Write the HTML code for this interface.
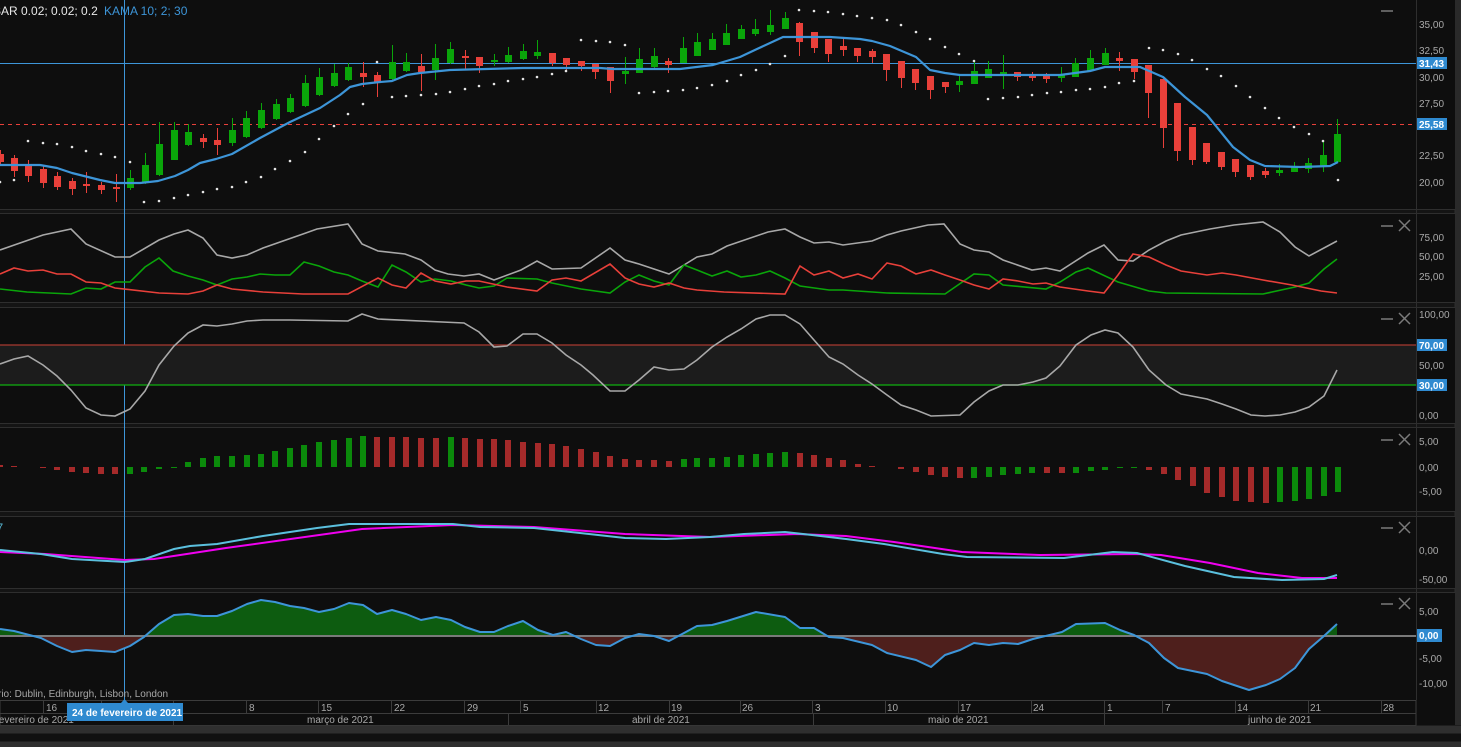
<!DOCTYPE html>
<html><head><meta charset="utf-8"><style>
html,body{margin:0;padding:0;background:#0e0e0e;}
svg{display:block;}
text{font-family:"Liberation Sans",sans-serif;}
</style></head><body>
<svg width="1461" height="747" viewBox="0 0 1461 747" xmlns="http://www.w3.org/2000/svg">
<rect width="1461" height="747" fill="#0e0e0e"/>
<rect x="1455" y="0" width="6" height="725" fill="#2a2a2a"/>
<g fill="#141414" stroke="#2e2e2e" stroke-width="1">
<rect x="-1" y="209.5" width="1456" height="4"/>
<rect x="-1" y="302.5" width="1456" height="5"/>
<rect x="-1" y="423.5" width="1456" height="4"/>
<rect x="-1" y="511.5" width="1456" height="5"/>
<rect x="-1" y="588.5" width="1456" height="4"/>
</g>
<line x1="1416.5" y1="0" x2="1416.5" y2="700" stroke="#2e2e2e"/>

<line x1="124.5" y1="0" x2="124.5" y2="712" stroke="#3d95d8" stroke-width="1"/>

<line x1="0" y1="63.5" x2="1416" y2="63.5" stroke="#3d95d8" stroke-width="1"/>
<line x1="0" y1="124.5" x2="1416" y2="124.5" stroke="#e8403a" stroke-width="1" stroke-dasharray="4,4"/>
<path stroke="#0aa50a" stroke-width="1" d="M130.5 170V190M145.5 153V184M159.5 122V176M174.5 122V160M188.5 124V146M232.5 118V146M246.5 111V138M261.5 103V129M276.5 99V120M290.5 94V113M305.5 75V107M319.5 68V96M334.5 64V87M348.5 63V81M392.5 45V80M406.5 53V72M435.5 44V80M450.5 42V64M494.5 54V66M508.5 47V63M523.5 44V60M537.5 40V59M625.5 57V84M639.5 48V73M654.5 48V68M683.5 37V63M697.5 33V56M712.5 33V50M726.5 24V45M741.5 25V39M755.5 19V36M770.5 10V35M785.5 12V29M959.5 76V92M974.5 62V84M988.5 61V78M1003.5 55V89M1061.5 67V82M1075.5 58V77M1090.5 50V71M1105.5 48V65M1279.5 164V176M1294.5 162V172M1308.5 158V173M1323.5 141V172M1337.5 119V162"/>
<path stroke="#e8403a" stroke-width="1" d="M0.5 150V166M14.5 155V177M28.5 160V182M43.5 165V188M57.5 172V190M72.5 178V195M86.5 172V193M101.5 182V194M116.5 174V202M203.5 134V148M217.5 128V155M363.5 62V87M377.5 72V97M421.5 54V91M465.5 50V69M479.5 57V73M552.5 53V66M566.5 58V72M581.5 61V71M595.5 64V79M610.5 67V93M668.5 58V73M799.5 22V56M814.5 32V53M828.5 39V62M843.5 39V56M857.5 48V62M872.5 49V63M886.5 54V81M901.5 61V88M915.5 69V90M930.5 76V99M945.5 82V93M1017.5 72V81M1032.5 72V81M1046.5 73V83M1119.5 52V71M1134.5 59V79M1148.5 65V118M1163.5 79V148M1177.5 103V161M1192.5 127V165M1206.5 143V164M1221.5 152V170M1235.5 159V177M1250.5 165V180M1265.5 168V178"/>
<g fill="#0aa50a">
<rect x="127" y="178" width="7" height="10"/><rect x="142" y="165" width="7" height="17"/><rect x="156" y="144" width="7" height="31"/><rect x="171" y="130" width="7" height="30"/><rect x="185" y="132" width="7" height="13"/><rect x="229" y="130" width="7" height="13"/><rect x="243" y="118" width="7" height="19"/><rect x="258" y="110" width="7" height="18"/><rect x="273" y="104" width="7" height="15"/><rect x="287" y="98" width="7" height="14"/><rect x="302" y="83" width="7" height="23"/><rect x="316" y="77" width="7" height="18"/><rect x="331" y="73" width="7" height="13"/><rect x="345" y="67" width="7" height="13"/>
<rect x="389" y="62" width="7" height="17"/><rect x="403" y="62" width="7" height="9"/><rect x="432" y="58" width="7" height="12"/><rect x="447" y="49" width="7" height="14"/><rect x="491" y="60" width="7" height="2"/><rect x="505" y="55" width="7" height="7"/><rect x="520" y="51" width="7" height="8"/><rect x="534" y="52" width="7" height="4"/><rect x="622" y="71" width="7" height="3"/><rect x="636" y="59" width="7" height="14"/><rect x="651" y="56" width="7" height="11"/><rect x="680" y="48" width="7" height="15"/><rect x="694" y="42" width="7" height="14"/><rect x="709" y="39" width="7" height="11"/><rect x="723" y="33" width="7" height="12"/><rect x="738" y="29" width="7" height="10"/><rect x="752" y="29" width="7" height="5"/><rect x="767" y="25" width="7" height="7"/><rect x="782" y="18" width="7" height="11"/>
<rect x="956" y="81" width="7" height="4"/><rect x="971" y="71" width="7" height="13"/><rect x="985" y="69" width="7" height="9"/><rect x="1000" y="72" width="7" height="3"/><rect x="1058" y="75" width="7" height="3"/><rect x="1072" y="63" width="7" height="14"/><rect x="1087" y="58" width="7" height="13"/><rect x="1102" y="53" width="7" height="12"/><rect x="1276" y="170" width="7" height="3"/><rect x="1291" y="167" width="7" height="5"/><rect x="1305" y="163" width="7" height="6"/><rect x="1320" y="155" width="7" height="12"/><rect x="1334" y="134" width="7" height="28"/>
</g>
<g fill="#e8403a">
<rect x="-3" y="154" width="7" height="8"/><rect x="11" y="158" width="7" height="13"/><rect x="25" y="164" width="7" height="12"/><rect x="40" y="169" width="7" height="14"/><rect x="54" y="176" width="7" height="11"/><rect x="69" y="181" width="7" height="8"/><rect x="83" y="184" width="7" height="2"/><rect x="98" y="185" width="7" height="5"/><rect x="113" y="187" width="7" height="2"/><rect x="200" y="138" width="7" height="4"/><rect x="214" y="140" width="7" height="5"/><rect x="360" y="73" width="7" height="4"/><rect x="374" y="75" width="7" height="7"/>
<rect x="418" y="66" width="7" height="6"/><rect x="462" y="56" width="7" height="2"/><rect x="476" y="57" width="7" height="9"/><rect x="549" y="53" width="7" height="10"/><rect x="563" y="58" width="7" height="7"/><rect x="578" y="61" width="7" height="5"/><rect x="592" y="64" width="7" height="8"/><rect x="607" y="67" width="7" height="14"/><rect x="665" y="61" width="7" height="4"/>
<rect x="796" y="23" width="7" height="19"/><rect x="811" y="32" width="7" height="16"/><rect x="825" y="39" width="7" height="15"/><rect x="840" y="46" width="7" height="4"/><rect x="854" y="48" width="7" height="8"/><rect x="869" y="51" width="7" height="6"/><rect x="883" y="54" width="7" height="16"/><rect x="898" y="61" width="7" height="17"/><rect x="912" y="69" width="7" height="14"/><rect x="927" y="76" width="7" height="14"/><rect x="942" y="82" width="7" height="5"/><rect x="1014" y="72" width="7" height="5"/><rect x="1029" y="74" width="7" height="4"/><rect x="1043" y="75" width="7" height="4"/><rect x="1116" y="58" width="7" height="3"/><rect x="1131" y="59" width="7" height="13"/><rect x="1145" y="65" width="7" height="28"/><rect x="1160" y="79" width="7" height="49"/><rect x="1174" y="103" width="7" height="48"/><rect x="1189" y="127" width="7" height="33"/><rect x="1203" y="143" width="7" height="19"/><rect x="1218" y="152" width="7" height="15"/><rect x="1232" y="159" width="7" height="13"/><rect x="1247" y="165" width="7" height="12"/><rect x="1262" y="171" width="7" height="4"/>
</g>
<polyline fill="none" stroke="#3d95d8" stroke-width="2.2" stroke-linejoin="round" points="0,165 40,165 57,168 72,173 100,180 115,183 140,183 158,181 175,176 188,170 200,163 216,159 232,154 260,138 290,122 320,108 340,95 350,87 362,84 380,82 392,81 407,75 420,73 450,70 523,68 600,68 613,69 680,69 713,65 740,57 757,49 783,37 830,37 860,39 872,41 890,46 916,57 930,70 945,73 960,75 1060,75 1090,71 1105,67 1140,67 1163,77 1185,97 1207,115 1233,147 1250,160 1265,166 1300,167 1330,166 1338,162"/>
<g fill="#e6e6e6">
<circle cx="0" cy="182" r="1.3"/><circle cx="14" cy="180" r="1.3"/><circle cx="28" cy="141" r="1.3"/><circle cx="43" cy="143" r="1.3"/><circle cx="57" cy="144" r="1.3"/><circle cx="72" cy="147" r="1.3"/><circle cx="86" cy="151" r="1.3"/><circle cx="101" cy="154" r="1.3"/><circle cx="115" cy="157" r="1.3"/><circle cx="130" cy="162" r="1.3"/><circle cx="144" cy="202" r="1.3"/><circle cx="159" cy="201" r="1.3"/><circle cx="174" cy="198" r="1.3"/><circle cx="188" cy="195" r="1.3"/><circle cx="203" cy="192" r="1.3"/><circle cx="217" cy="189" r="1.3"/><circle cx="232" cy="187" r="1.3"/><circle cx="246" cy="182" r="1.3"/><circle cx="261" cy="177" r="1.3"/><circle cx="275" cy="169" r="1.3"/><circle cx="290" cy="161" r="1.3"/><circle cx="305" cy="152" r="1.3"/><circle cx="319" cy="139" r="1.3"/><circle cx="334" cy="126" r="1.3"/><circle cx="348" cy="114" r="1.3"/><circle cx="363" cy="104" r="1.3"/><circle cx="377" cy="62" r="1.3"/><circle cx="392" cy="97" r="1.3"/><circle cx="406" cy="96" r="1.3"/><circle cx="421" cy="95" r="1.3"/><circle cx="436" cy="94" r="1.3"/><circle cx="450" cy="92" r="1.3"/><circle cx="465" cy="89" r="1.3"/><circle cx="479" cy="86" r="1.3"/><circle cx="494" cy="84" r="1.3"/><circle cx="508" cy="81" r="1.3"/><circle cx="523" cy="79" r="1.3"/><circle cx="537" cy="77" r="1.3"/><circle cx="552" cy="74" r="1.3"/><circle cx="566" cy="71" r="1.3"/><circle cx="581" cy="40" r="1.3"/><circle cx="596" cy="41" r="1.3"/><circle cx="610" cy="42" r="1.3"/><circle cx="625" cy="45" r="1.3"/><circle cx="639" cy="93" r="1.3"/><circle cx="654" cy="92" r="1.3"/><circle cx="668" cy="91" r="1.3"/><circle cx="683" cy="90" r="1.3"/><circle cx="697" cy="88" r="1.3"/><circle cx="712" cy="85" r="1.3"/><circle cx="727" cy="81" r="1.3"/><circle cx="741" cy="75" r="1.3"/><circle cx="756" cy="70" r="1.3"/><circle cx="770" cy="64" r="1.3"/><circle cx="785" cy="56" r="1.3"/><circle cx="799" cy="10" r="1.3"/><circle cx="814" cy="11" r="1.3"/><circle cx="828" cy="12" r="1.3"/><circle cx="843" cy="14" r="1.3"/><circle cx="857" cy="16" r="1.3"/><circle cx="872" cy="18" r="1.3"/><circle cx="887" cy="20" r="1.3"/><circle cx="901" cy="25" r="1.3"/><circle cx="916" cy="32" r="1.3"/><circle cx="930" cy="39" r="1.3"/><circle cx="945" cy="47" r="1.3"/><circle cx="959" cy="54" r="1.3"/><circle cx="974" cy="61" r="1.3"/><circle cx="988" cy="99" r="1.3"/><circle cx="1003" cy="98" r="1.3"/><circle cx="1018" cy="97" r="1.3"/><circle cx="1032" cy="95" r="1.3"/><circle cx="1047" cy="93" r="1.3"/><circle cx="1061" cy="92" r="1.3"/><circle cx="1076" cy="90" r="1.3"/><circle cx="1090" cy="89" r="1.3"/><circle cx="1105" cy="87" r="1.3"/><circle cx="1119" cy="83" r="1.3"/><circle cx="1134" cy="81" r="1.3"/><circle cx="1149" cy="48" r="1.3"/><circle cx="1163" cy="50" r="1.3"/><circle cx="1178" cy="54" r="1.3"/><circle cx="1192" cy="60" r="1.3"/><circle cx="1207" cy="69" r="1.3"/><circle cx="1221" cy="76" r="1.3"/><circle cx="1236" cy="86" r="1.3"/><circle cx="1250" cy="97" r="1.3"/><circle cx="1265" cy="108" r="1.3"/><circle cx="1279" cy="118" r="1.3"/><circle cx="1294" cy="127" r="1.3"/><circle cx="1309" cy="134" r="1.3"/><circle cx="1323" cy="141" r="1.3"/><circle cx="1338" cy="180" r="1.3"/>
</g>
<text x="-7" y="15" font-size="12" fill="#e8e8e8">SAR 0.02; 0.02; 0.2</text>
<text x="104" y="15" font-size="12" fill="#3d95d8">KAMA 10; 2; 30</text>

<polyline fill="none" stroke="#a8a8a8" stroke-width="1.6" points="0,250 43,235 71,229 86,244 115,257 130,257 159,240 174,234 188,230 203,238 217,255 232,258 247,255 263,248 303,234 317,229 348,224 362,244 378,251 405,254 421,260 435,270 448,274 464,276 479,274 494,280 521,270 537,261 552,269 581,268 610,248 625,260 639,264 654,269 669,274 684,265 697,257 712,254 727,246 768,232 785,229 800,237 814,243 829,242 843,245 872,241 887,235 901,231 928,225 944,224 960,244 974,250 989,252 1003,260 1032,270 1046,268 1060,271 1088,253 1104,245 1118,260 1133,261 1149,250 1166,241 1181,235 1210,229 1234,225 1263,222 1280,232 1295,247 1309,256 1337,241"/>
<polyline fill="none" stroke="#0aa50a" stroke-width="1.6" points="0,289 27,292 71,294 86,288 101,289 115,282 130,282 145,267 159,258 173,271 188,276 203,280 217,285 232,279 247,277 260,274 275,275 290,275 304,262 319,266 334,272 348,275 362,281 378,287 392,265 406,272 421,282 435,279 451,281 466,285 479,288 494,286 507,278 537,279 552,283 581,289 610,293 625,282 639,275 654,281 669,285 684,265 697,270 712,276 727,271 741,277 756,275 770,271 785,278 800,286 829,290 843,290 887,293 945,294 974,274 989,275 1003,285 1046,289 1060,282 1076,272 1088,268 1118,282 1149,291 1166,293 1263,294 1295,287 1309,283 1324,269 1337,259"/>
<polyline fill="none" stroke="#e8403a" stroke-width="1.6" points="0,274 14,268 28,271 43,270 57,274 71,274 86,282 101,283 115,288 159,293 188,294 203,291 217,285 232,289 263,292 303,294 348,294 378,278 392,285 406,288 421,273 435,281 451,284 466,281 479,281 507,287 537,291 552,280 566,278 581,281 610,264 625,278 639,284 654,287 669,283 684,288 697,290 724,292 785,294 800,266 814,275 829,271 843,278 858,274 872,279 887,263 901,266 916,274 931,270 945,275 960,280 974,285 989,289 1003,279 1018,281 1033,284 1046,283 1060,287 1088,291 1104,293 1118,275 1133,254 1149,257 1166,265 1181,271 1207,275 1222,273 1236,275 1263,280 1292,285 1321,291 1337,293"/>

<rect x="0" y="345" width="1416" height="40" fill="#1c1c1c"/>
<line x1="0" y1="345" x2="1416" y2="345" stroke="#a83a30" stroke-width="1.3"/>
<line x1="0" y1="385" x2="1416" y2="385" stroke="#10b010" stroke-width="1.3"/>
<polyline fill="none" stroke="#a8a8a8" stroke-width="1.6" points="0,364 14,359 28,356 43,365 57,376 71,390 86,408 101,415 115,416 130,409 145,391 159,365 174,346 188,333 203,325 217,326 232,324 247,321 263,320 290,320 348,321 362,314 378,319 464,323 479,332 494,347 507,346 523,334 537,334 552,343 566,355 581,365 593,375 610,391 625,391 639,380 654,367 669,370 684,369 697,360 712,347 727,337 741,329 756,319 770,315 785,315 800,324 814,340 829,357 843,364 858,375 872,384 887,395 901,405 916,410 931,416 960,415 974,402 989,391 1003,385 1018,385 1033,382 1046,378 1060,366 1076,345 1091,335 1105,330 1118,333 1133,347 1149,370 1166,385 1181,394 1207,399 1222,404 1236,409 1251,415 1265,416 1280,415 1295,412 1309,407 1324,396 1337,370"/>

<g fill="#a52a2a">
<rect x="-3" y="465" width="6" height="2"/><rect x="11" y="466" width="6" height="1"/><rect x="40" y="467" width="6" height="1"/><rect x="54" y="467" width="6" height="3"/><rect x="69" y="467" width="6" height="5"/><rect x="83" y="467" width="6" height="6"/><rect x="98" y="467" width="6" height="7"/><rect x="112" y="467" width="6" height="7"/>
<rect x="374" y="437" width="6" height="30"/><rect x="389" y="437" width="6" height="30"/><rect x="403" y="437" width="6" height="30"/><rect x="418" y="438" width="6" height="29"/><rect x="433" y="438" width="6" height="29"/><rect x="462" y="438" width="6" height="29"/><rect x="477" y="439" width="6" height="28"/><rect x="491" y="439" width="6" height="28"/><rect x="505" y="440" width="6" height="27"/><rect x="520" y="442" width="6" height="25"/><rect x="535" y="443" width="6" height="24"/><rect x="549" y="444" width="6" height="23"/><rect x="563" y="446" width="6" height="21"/><rect x="578" y="449" width="6" height="18"/><rect x="593" y="452" width="6" height="15"/><rect x="607" y="456" width="6" height="11"/><rect x="622" y="459" width="6" height="8"/><rect x="636" y="460" width="6" height="7"/><rect x="651" y="460" width="6" height="7"/><rect x="666" y="461" width="6" height="6"/>
<rect x="797" y="453" width="6" height="14"/><rect x="811" y="455" width="6" height="12"/><rect x="826" y="458" width="6" height="9"/><rect x="840" y="460" width="6" height="7"/><rect x="855" y="464" width="6" height="3"/><rect x="869" y="466" width="6" height="1"/>
<rect x="898" y="467" width="6" height="2"/><rect x="913" y="467" width="6" height="5"/><rect x="928" y="467" width="6" height="8"/><rect x="942" y="467" width="6" height="10"/><rect x="957" y="467" width="6" height="11"/><rect x="1044" y="467" width="6" height="6"/><rect x="1059" y="467" width="6" height="6"/>
<rect x="1146" y="467" width="6" height="3"/><rect x="1161" y="467" width="6" height="7"/><rect x="1175" y="467" width="6" height="13"/><rect x="1190" y="467" width="6" height="19"/><rect x="1204" y="467" width="6" height="26"/><rect x="1219" y="467" width="6" height="30"/><rect x="1233" y="467" width="6" height="34"/><rect x="1248" y="467" width="6" height="35"/><rect x="1263" y="467" width="6" height="36"/>
</g>
<g fill="#0b8a0b">
<rect x="127" y="467" width="6" height="7"/><rect x="141" y="467" width="6" height="5"/><rect x="156" y="467" width="6" height="2"/><rect x="171" y="467" width="6" height="1"/>
<rect x="185" y="462" width="6" height="5"/><rect x="200" y="458" width="6" height="9"/><rect x="214" y="456" width="6" height="11"/><rect x="229" y="456" width="6" height="11"/><rect x="244" y="455" width="6" height="12"/><rect x="258" y="454" width="6" height="13"/><rect x="272" y="451" width="6" height="16"/><rect x="287" y="448" width="6" height="19"/><rect x="301" y="445" width="6" height="22"/><rect x="316" y="442" width="6" height="25"/><rect x="331" y="440" width="6" height="27"/><rect x="346" y="438" width="6" height="29"/><rect x="360" y="436" width="6" height="31"/><rect x="448" y="437" width="6" height="30"/>
<rect x="681" y="459" width="6" height="8"/><rect x="694" y="458" width="6" height="9"/><rect x="709" y="458" width="6" height="9"/><rect x="724" y="457" width="6" height="10"/><rect x="738" y="455" width="6" height="12"/><rect x="753" y="454" width="6" height="13"/><rect x="767" y="453" width="6" height="14"/><rect x="782" y="452" width="6" height="15"/>
<rect x="971" y="467" width="6" height="11"/><rect x="986" y="467" width="6" height="10"/><rect x="1000" y="467" width="6" height="8"/><rect x="1015" y="467" width="6" height="7"/><rect x="1029" y="467" width="6" height="6"/><rect x="1073" y="467" width="6" height="6"/><rect x="1088" y="467" width="6" height="4"/><rect x="1102" y="467" width="6" height="3"/><rect x="1117" y="467" width="6" height="1"/><rect x="1131" y="467" width="6" height="1"/>
<rect x="1277" y="467" width="6" height="35"/><rect x="1292" y="467" width="6" height="34"/><rect x="1306" y="467" width="6" height="32"/><rect x="1321" y="467" width="6" height="29"/><rect x="1335" y="467" width="6" height="25"/>
</g>

<polyline fill="none" stroke="#f000f0" stroke-width="2" points="0,552 45,554 125,560 154,559 226,548 362,529 453,525 534,527 625,534 710,537 797,534 846,536 894,542 962,552 1040,555 1137,554 1161,555 1210,563 1258,573 1302,578 1337,578"/>
<polyline fill="none" stroke="#5bc0de" stroke-width="2" points="0,550 41,554 72,559 125,562 145,559 174,549 190,546 217,544 263,536 317,528 349,524 408,524 453,524 480,527 534,528 580,533 625,538 666,539 710,537 744,534 785,532 812,535 846,539 884,544 943,554 967,557 1064,558 1113,552 1137,553 1185,566 1234,577 1282,580 1324,579 1337,575"/>
<text x="-3" y="531" font-size="11" fill="#5bc0de">7</text>

<defs>
<clipPath id="ab"><rect x="0" y="592" width="1416" height="44"/></clipPath>
<clipPath id="bl"><rect x="0" y="636" width="1416" height="64"/></clipPath>
</defs>
<polygon clip-path="url(#ab)" fill="#0d5c10" points="0,636 0,629 14,631 41,638 57,646 72,652 86,650 101,651 115,652 130,646 144,637 159,624 174,615 188,614 203,616 217,616 232,611 247,604 261,600 275,602 290,606 304,608 319,612 334,609 349,603 363,605 377,614 392,610 406,614 421,620 436,617 451,620 465,627 480,632 494,632 508,626 523,621 538,630 553,635 566,632 581,639 596,645 610,646 625,638 639,634 654,636 669,641 684,633 697,626 712,625 727,621 756,612 785,617 800,628 814,628 829,637 843,638 872,645 887,653 916,660 931,667 945,655 960,650 974,643 989,645 1003,643 1018,644 1033,639 1062,632 1076,624 1105,623 1120,630 1134,635 1149,643 1164,658 1178,668 1207,674 1222,681 1249,690 1266,685 1280,679 1295,668 1309,649 1324,636 1337,624 1337,636"/>
<polygon clip-path="url(#bl)" fill="#4e1f1c" points="0,636 0,629 14,631 41,638 57,646 72,652 86,650 101,651 115,652 130,646 144,637 159,624 174,615 188,614 203,616 217,616 232,611 247,604 261,600 275,602 290,606 304,608 319,612 334,609 349,603 363,605 377,614 392,610 406,614 421,620 436,617 451,620 465,627 480,632 494,632 508,626 523,621 538,630 553,635 566,632 581,639 596,645 610,646 625,638 639,634 654,636 669,641 684,633 697,626 712,625 727,621 756,612 785,617 800,628 814,628 829,637 843,638 872,645 887,653 916,660 931,667 945,655 960,650 974,643 989,645 1003,643 1018,644 1033,639 1062,632 1076,624 1105,623 1120,630 1134,635 1149,643 1164,658 1178,668 1207,674 1222,681 1249,690 1266,685 1280,679 1295,668 1309,649 1324,636 1337,624 1337,636"/>
<line x1="0" y1="636" x2="1416" y2="636" stroke="#7a7a7a" stroke-width="2"/>
<polyline fill="none" stroke="#3d95d8" stroke-width="2" stroke-linejoin="round" points="0,629 14,631 41,638 57,646 72,652 86,650 101,651 115,652 130,646 144,637 159,624 174,615 188,614 203,616 217,616 232,611 247,604 261,600 275,602 290,606 304,608 319,612 334,609 349,603 363,605 377,614 392,610 406,614 421,620 436,617 451,620 465,627 480,632 494,632 508,626 523,621 538,630 553,635 566,632 581,639 596,645 610,646 625,638 639,634 654,636 669,641 684,633 697,626 712,625 727,621 756,612 785,617 800,628 814,628 829,637 843,638 872,645 887,653 916,660 931,667 945,655 960,650 974,643 989,645 1003,643 1018,644 1033,639 1062,632 1076,624 1105,623 1120,630 1134,635 1149,643 1164,658 1178,668 1207,674 1222,681 1249,690 1266,685 1280,679 1295,668 1309,649 1324,636 1337,624"/>
<text x="-2" y="697" font-size="10" fill="#a8a8a8">rio: Dublin, Edinburgh, Lisbon, London</text>

<g stroke="#7a7a7a" stroke-width="1.5" fill="none">
<path d="M1381 11H1393"/>
<path d="M1381 226H1393M1399 220L1410 231M1410 220L1399 231"/>
<path d="M1381 319H1393M1399 313L1410 324M1410 313L1399 324"/>
<path d="M1381 440H1393M1399 434L1410 445M1410 434L1399 445"/>
<path d="M1381 528H1393M1399 522L1410 533M1410 522L1399 533"/>
<path d="M1381 604H1393M1399 598L1410 609M1410 598L1399 609"/>
</g>

<g font-size="10" fill="#a8a8a8">
<text x="1419" y="28">35,00</text><text x="1419" y="54">32,50</text><text x="1419" y="81">30,00</text><text x="1419" y="107">27,50</text><text x="1419" y="159">22,50</text><text x="1419" y="186">20,00</text>
<text x="1419" y="241">75,00</text><text x="1419" y="260">50,00</text><text x="1419" y="280">25,00</text>
<text x="1419" y="318">100,00</text><text x="1419" y="369">50,00</text><text x="1419" y="419">0,00</text>
<text x="1419" y="445">5,00</text><text x="1419" y="471">0,00</text><text x="1419" y="495">-5,00</text>
<text x="1419" y="554">0,00</text><text x="1419" y="583">-50,00</text>
<text x="1419" y="615">5,00</text><text x="1419" y="662">-5,00</text><text x="1419" y="687">-10,00</text>
</g>
<g font-size="10" font-weight="bold" fill="#ffffff">
<rect x="1417" y="57" width="30" height="12" fill="#2f8ad0"/><text x="1419" y="67">31,43</text>
<rect x="1417" y="118" width="30" height="12" fill="#2f8ad0"/><text x="1419" y="128">25,58</text>
<rect x="1417" y="339" width="30" height="12" fill="#2f8ad0"/><text x="1419" y="349">70,00</text>
<rect x="1417" y="379" width="30" height="12" fill="#2f8ad0"/><text x="1419" y="389">30,00</text>
<rect x="1417" y="629" width="25" height="13" fill="#2f8ad0"/><text x="1419" y="639">0,00</text>
</g>

<rect x="0" y="700.5" width="1416" height="25" fill="#0e0e0e" stroke="#3c3c3c"/>
<line x1="0" y1="713.5" x2="1416" y2="713.5" stroke="#3c3c3c"/>
<g stroke="#3c3c3c">
<path d="M43.5 701V713M101.5 701V713M173.5 701V713M246.5 701V713M318.5 701V713M391.5 701V713M464.5 701V713M520.5 701V713M596.5 701V713M669.5 701V713M740.5 701V713M812.5 701V713M885.5 701V713M958.5 701V713M1031.5 701V713M1104.5 701V713M1162.5 701V713M1235.5 701V713M1308.5 701V713M1381.5 701V713"/>
<path d="M173.5 713V726M508.5 713V726M813.5 713V726M1104.5 713V726"/>
</g>
<g font-size="10" fill="#a8a8a8">
<text x="46" y="711">16</text><text x="249" y="711">8</text><text x="321" y="711">15</text><text x="394" y="711">22</text><text x="467" y="711">29</text><text x="523" y="711">5</text><text x="598" y="711">12</text><text x="671" y="711">19</text><text x="742" y="711">26</text><text x="815" y="711">3</text><text x="887" y="711">10</text><text x="960" y="711">17</text><text x="1033" y="711">24</text><text x="1107" y="711">1</text><text x="1165" y="711">7</text><text x="1237" y="711">14</text><text x="1310" y="711">21</text><text x="1383" y="711">28</text>
<text x="-4" y="723">fevereiro de 2021</text><text x="307" y="723">março de 2021</text><text x="632" y="723">abril de 2021</text><text x="928" y="723">maio de 2021</text><text x="1248" y="723">junho de 2021</text>
</g>
<rect x="67" y="703" width="116" height="18" fill="#2f8ad0"/>
<path d="M121 703L124.5 699L128 703Z" fill="#2f8ad0"/>
<text x="72" y="716" font-size="10" font-weight="bold" fill="#ffffff">24 de fevereiro de 2021</text>
<rect x="0" y="725.5" width="1461" height="8" fill="#2f2f2f"/>
<rect x="0" y="733.5" width="1461" height="8" fill="#111111"/>
<rect x="0" y="741.5" width="1461" height="6" fill="#2f2f2f"/>
</svg>
</body></html>
